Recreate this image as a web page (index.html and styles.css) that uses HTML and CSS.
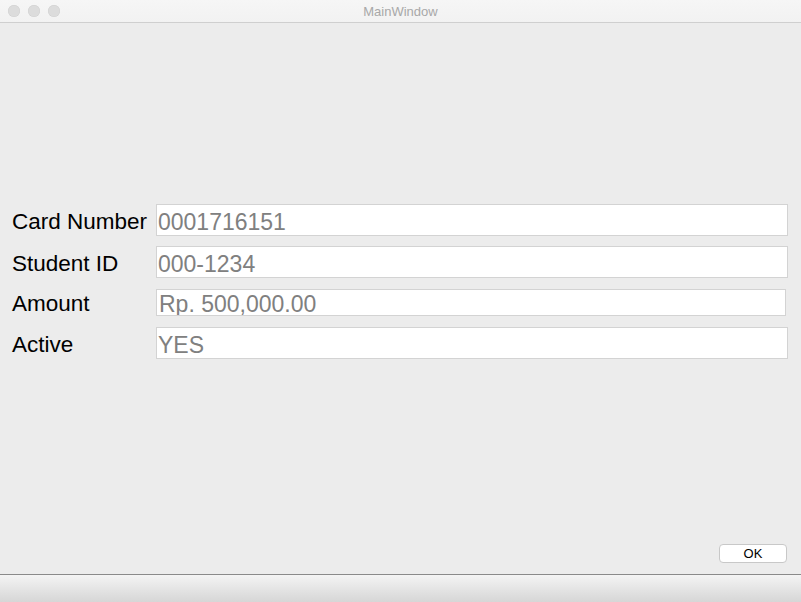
FILE: index.html
```html
<!DOCTYPE html>
<html>
<head>
<meta charset="utf-8">
<link rel="stylesheet" href="styles.css">
</head>
<body>
<div class="window">
  <div class="titlebar">
    <div class="lights">
      <span class="light"></span><span class="light"></span><span class="light"></span>
    </div>
    <div class="title">MainWindow</div>
  </div>
  <div class="content">
    <div class="form">
      <div class="row r1"><div class="label">Card Number</div><div class="field">0001716151</div></div>
      <div class="row r2"><div class="label">Student ID</div><div class="field">000-1234</div></div>
      <div class="row r3"><div class="label">Amount</div><div class="field short">Rp. 500,000.00</div></div>
      <div class="row r4"><div class="label">Active</div><div class="field">YES</div></div>
    </div>
    <div class="actions"><button class="ok">OK</button></div>
  </div>
  <div class="statusbar"></div>
</div>
</body>
</html>
```
FILE: styles.css
```css
html, body {
  margin: 0;
  padding: 0;
  background: #ececec;
  font-family: "Liberation Sans", Arial, sans-serif;
}
.window {
  width: 801px;
  height: 602px;
  display: flex;
  flex-direction: column;
  background: #ececec;
  overflow: hidden;
}
.titlebar {
  height: 22px;
  border-bottom: 1px solid #cfcfcf;
  background: linear-gradient(#f6f6f6, #f2f2f2);
  display: flex;
  align-items: center;
  position: relative;
  flex: none;
}
.lights {
  display: flex;
  gap: 8px;
  padding-left: 8px;
}
.light {
  width: 12px;
  height: 12px;
  border-radius: 50%;
  background: #dcdcdc;
  box-shadow: inset 0 0 0 0.5px #d0d0d0;
}
.title {
  position: absolute;
  left: 0;
  right: 0;
  text-align: center;
  font-size: 13px;
  color: #a8a8a8;
  top: 4px;
}
.content {
  flex: 1;
  display: flex;
  flex-direction: column;
  padding: 0 13px 11px 12px;
}
.form {
  margin-top: 181px;
  display: flex;
  flex-direction: column;
}
.row {
  display: flex;
  align-items: center;
}
.r2 { margin-top: 10px; }
.r3 { margin-top: 11px; }
.r4 { margin-top: 11px; }
.label {
  width: 144px;
  font-size: 22.5px;
  line-height: 20px;
  color: #000;
  padding-top: 3px;
}
.field {
  flex: 1;
  height: 28px;
  padding-top: 2px;
  border: 1px solid #d3d3d3;
  background: #fff;
  box-sizing: content-box;
  font-size: 23px;
  line-height: 30px;
  color: #808080;
  padding-left: 1px;
  overflow: hidden;
}
.field.short {
  height: 24px;
  padding-top: 1px;
  line-height: 27px;
  margin-right: 2px;
  padding-left: 2px;
}
.actions {
  margin-top: auto;
  display: flex;
  justify-content: flex-end;
  padding-right: 1px;
}
.ok {
  width: 68px;
  height: 19px;
  border: 1px solid #c8c8c8;
  border-radius: 4px;
  background: #fff;
  font-family: "Liberation Sans", Arial, sans-serif;
  font-size: 13px;
  color: #000;
  padding: 0;
  line-height: 17px;
}
.statusbar {
  flex: none;
  height: 27px;
  border-top: 1px solid #8a8a8a;
  background: linear-gradient(#f4f4f4, #d6d6d6);
}
```
